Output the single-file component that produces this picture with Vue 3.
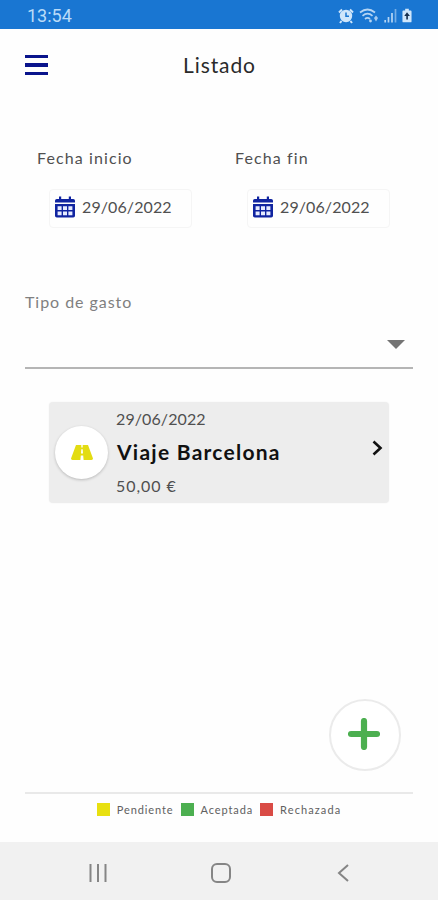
<template>
  <div class="app">
    <div class="status-bar">
      <span class="clock">13:54</span>
      <div class="status-icons">
        <svg class="alarm" width="16" height="16" viewBox="0 0 16 16">
          <path d="M1 4.5L4 1.5M15 4.5L12 1.5M3.5 13L2 15M12.5 13L14 15" stroke="#cfe6fb" stroke-width="2" />
          <circle cx="8" cy="8" r="6.2" fill="#cfe6fb" />
          <path d="M8 4.5V8.3H11" fill="none" stroke="#1976d2" stroke-width="1.5" />
        </svg>
        <svg class="wifi" width="20" height="16" viewBox="0 0 20 16">
          <g fill="none" stroke="#b5d5f4" stroke-width="1.7">
            <path d="M1 4.5Q8.5 -1.5 16 4.5" />
            <path d="M3.5 7.8Q8.5 3.5 13.5 7.8" />
            <path d="M6 11Q8.5 8.8 11 11" />
          </g>
          <circle cx="11.5" cy="13" r="1.4" fill="#b5d5f4" />
          <path d="M15 10l2-2.5 2 2.5-2 3.5z" fill="#a3caf0" />
        </svg>
        <svg class="signal" width="13" height="15" viewBox="0 0 13 15">
          <path d="M1.2 12v2.5M4.5 9v5.5M8 5v9.5" stroke="#b5d5f4" stroke-width="1.7" />
          <path d="M11.5 1v13.5" stroke="#75afe7" stroke-width="1.7" />
        </svg>
        <svg class="battery" width="10" height="15" viewBox="0 0 11 16">
          <path d="M3.5 0.5h4v2h2a1 1 0 0 1 1 1v11a1 1 0 0 1-1 1h-8a1 1 0 0 1-1-1v-11a1 1 0 0 1 1-1h2z" fill="#cfe6fb" />
          <path d="M5.5 4.5L2.5 8.5H4.7V12.5H6.5V8.5H8.7z" fill="#17304e" />
        </svg>
      </div>
    </div>

    <header class="header">
      <button class="menu-button" aria-label="Menu">
        <span></span>
        <span></span>
        <span></span>
      </button>
      <h1 class="title">Listado</h1>
    </header>

    <section class="dates">
      <div v-for="date in dates" :key="date.label" class="date-field">
        <label class="date-label">{{ date.label }}</label>
        <div class="date-input">
          <svg width="20" height="22" viewBox="0 0 20 22">
            <path d="M4 0.5h2.2v2.5h7.6V0.5H16v2.5h2.2a1.8 1.8 0 0 1 1.8 1.8V6.6H0V4.8A1.8 1.8 0 0 1 1.8 3H4z" fill="#1024a0" />
            <path d="M0 8h20v11.7a1.8 1.8 0 0 1-1.8 1.8H1.8A1.8 1.8 0 0 1 0 19.7z" fill="#1024a0" />
            <path d="M2.6 10.3h4v3.6h-4zM8 10.3h4v3.6H8zM13.4 10.3h4v3.6h-4zM2.6 15.6h4v3.6h-4zM8 15.6h4v3.6H8zM13.4 15.6h4v3.6h-4z" fill="#e6ebff" />
          </svg>
          <span class="date-value">{{ date.value }}</span>
        </div>
      </div>
    </section>

    <section class="type-select">
      <label class="type-label">Tipo de gasto</label>
      <svg class="caret" width="18" height="9" viewBox="0 0 18 9">
        <path d="M0 0H18L9 9z" fill="#747474" />
      </svg>
    </section>

    <main class="list">
      <article v-for="expense in expenses" :key="expense.name" class="expense">
        <div class="expense-icon">
          <svg width="22" height="15" viewBox="0 0 22 15">
            <path d="M5 0H10.3V2.5H11.7V0H17L22 13.6Q22 15 20.5 15H12.6L12.2 10.5H9.8L9.4 15H1.5Q0 15 0 13.6zM10.3 4.3L10 8.5H12L11.7 4.3z" fill="#e3dc12" fill-rule="evenodd" />
          </svg>
        </div>
        <div class="expense-info">
          <span class="expense-date">{{ expense.date }}</span>
          <strong class="expense-name">{{ expense.name }}</strong>
          <span class="expense-amount">{{ expense.amount }}</span>
        </div>
        <svg class="chevron" width="11" height="16" viewBox="0 0 11 16">
          <path d="M1.5 1.5L8.5 8L1.5 14.5" fill="none" stroke="#111" stroke-width="2.6" />
        </svg>
      </article>
    </main>

    <button class="add-button" aria-label="Añadir">
      <svg width="32" height="32" viewBox="0 0 32 32">
        <path d="M16 3V29M3 16H29" stroke="#4caf50" stroke-width="6.2" stroke-linecap="round" />
      </svg>
    </button>

    <footer class="legend">
      <div v-for="state in states" :key="state.name" class="legend-item" :class="state.name">
        <span class="legend-color"></span>
        <span class="legend-text">{{ state.label }}</span>
      </div>
    </footer>

    <nav class="nav-bar">
      <svg width="18" height="18" viewBox="0 0 18 18">
        <path d="M1.5 0V18M9 0V18M16.5 0V18" stroke="#858585" stroke-width="2" />
      </svg>
      <svg width="20" height="20" viewBox="0 0 20 20">
        <rect x="1" y="1" width="18" height="18" rx="5" fill="none" stroke="#858585" stroke-width="2" />
      </svg>
      <svg width="12" height="18" viewBox="0 0 12 18">
        <path d="M11 1L2 9L11 17" fill="none" stroke="#858585" stroke-width="2" />
      </svg>
    </nav>
  </div>
</template>

<script setup>
import { ref } from 'vue';

const dates = ref([
  { label: 'Fecha inicio', value: '29/06/2022' },
  { label: 'Fecha fin', value: '29/06/2022' }
]);

const expenses = ref([
  { date: '29/06/2022', name: 'Viaje Barcelona', amount: '50,00 €' }
]);

const states = [
  { name: 'pending', label: 'Pendiente' },
  { name: 'accepted', label: 'Aceptada' },
  { name: 'rejected', label: 'Rechazada' }
];
</script>

<style>
body {
  margin: 0;
}
</style>

<style scoped>
.app {
  display: flex;
  flex-direction: column;
  height: 900px;
  background-color: #fefefe;
  font-family: Lato, 'Open Sans', sans-serif;
  color: #333;
}

.app * {
  box-sizing: border-box;
}

button {
  padding: 0;
  border: none;
  background: none;
}

svg {
  display: block;
  flex-shrink: 0;
}

.status-bar {
  display: flex;
  align-items: center;
  justify-content: space-between;
  height: 29px;
  padding: 2px 26px 0 27px;
  background-color: #1976d2;
}

.clock {
  font-family: Roboto, sans-serif;
  font-size: 18px;
  color: #b9dbf8;
}

.status-icons {
  display: flex;
  align-items: center;
  gap: 5px;
}

.header {
  display: grid;
  grid-template-columns: 24px 1fr 24px;
  align-items: center;
  height: 72px;
  padding: 0 25px;
}

.menu-button {
  display: flex;
  flex-direction: column;
  gap: 5px;
}

.menu-button span {
  width: 23px;
  height: 3.5px;
  background-color: #0a148c;
}

.title {
  margin: 0;
  padding: 0 0 2px 1px;
  text-align: center;
  font-size: 21px;
  font-weight: 400;
  letter-spacing: 0.9px;
  color: #2a2a2a;
}

.dates {
  display: grid;
  grid-template-columns: 198px 1fr;
  padding: 47px 0 0 37px;
}

.date-label {
  display: block;
  height: 20px;
  line-height: 20px;
  font-size: 16px;
  letter-spacing: 1.1px;
  color: #505050;
}

.date-input {
  display: flex;
  align-items: center;
  gap: 7px;
  width: 143px;
  height: 39px;
  margin: 21px 0 0 12px;
  padding: 0 0 3px 5px;
  border: 1px solid #f5f5f5;
  border-radius: 4px;
}

.date-value {
  padding-bottom: 2px;
  font-size: 16px;
  letter-spacing: 0.1px;
  color: #505050;
}

.type-select {
  display: flex;
  flex-direction: column;
  height: 77px;
  margin: 64px 25px 0;
  border-bottom: 2px solid #b5b5b5;
}

.type-label {
  height: 20px;
  line-height: 20px;
  font-size: 16px;
  letter-spacing: 0.95px;
  color: #808080;
}

.caret {
  align-self: flex-end;
  margin: 28px 8px 0 0;
}

.list {
  flex: 1;
  padding: 33px 49px 0;
}

.expense {
  display: flex;
  align-items: center;
  height: 101px;
  padding: 0 6px;
  background-color: #ededed;
  border-radius: 4px;
  box-shadow: 0 0 2px rgba(0, 0, 0, 0.06);
}

.expense-icon {
  display: flex;
  align-items: center;
  justify-content: center;
  width: 53px;
  height: 53px;
  border-radius: 50%;
  background-color: #fff;
  box-shadow: 0 1px 3px rgba(0, 0, 0, 0.22);
}

.expense-info {
  display: flex;
  flex: 1;
  flex-direction: column;
  gap: 10px;
  margin-left: 8px;
}

.expense-date,
.expense-amount {
  line-height: 20px;
  font-size: 16px;
  color: #505050;
}

.expense-date {
  letter-spacing: 0.1px;
}

.expense-amount {
  letter-spacing: 0.95px;
}

.expense-name {
  padding: 0 0 2px 1px;
  line-height: 25px;
  font-size: 21px;
  font-weight: 700;
  letter-spacing: 1.25px;
  color: #111;
}

.chevron {
  margin-bottom: 10px;
}

.add-button {
  display: flex;
  align-items: center;
  justify-content: center;
  align-self: flex-end;
  width: 72px;
  height: 72px;
  margin: 0 37px 21px 0;
  padding: 0 2px 3px 0;
  border: 2px solid #ebebeb;
  border-radius: 50%;
  background-color: #fff;
}

.legend {
  display: flex;
  justify-content: center;
  height: 50px;
  margin: 0 25px;
  padding-top: 8px;
  border-top: 2px solid #e9e9e9;
  gap: 7px;
}

.legend-item {
  display: flex;
  align-items: center;
  height: 14px;
  gap: 7px;
}

.legend-color {
  width: 13px;
  height: 13px;
}

.pending .legend-color {
  background-color: #e8e010;
}

.accepted .legend-color {
  background-color: #4caf50;
}

.rejected .legend-color {
  background-color: #d94b45;
}

.legend-text {
  font-size: 11px;
  letter-spacing: 0.9px;
  color: #606060;
}

.rejected .legend-text {
  letter-spacing: 1.1px;
}

.nav-bar {
  display: flex;
  align-items: center;
  justify-content: space-between;
  height: 58px;
  padding: 3px 89px 0 89px;
  background-color: #f1f1f1;
}

.nav-bar svg:nth-child(2) {
  margin-left: -3px;
}
</style>
